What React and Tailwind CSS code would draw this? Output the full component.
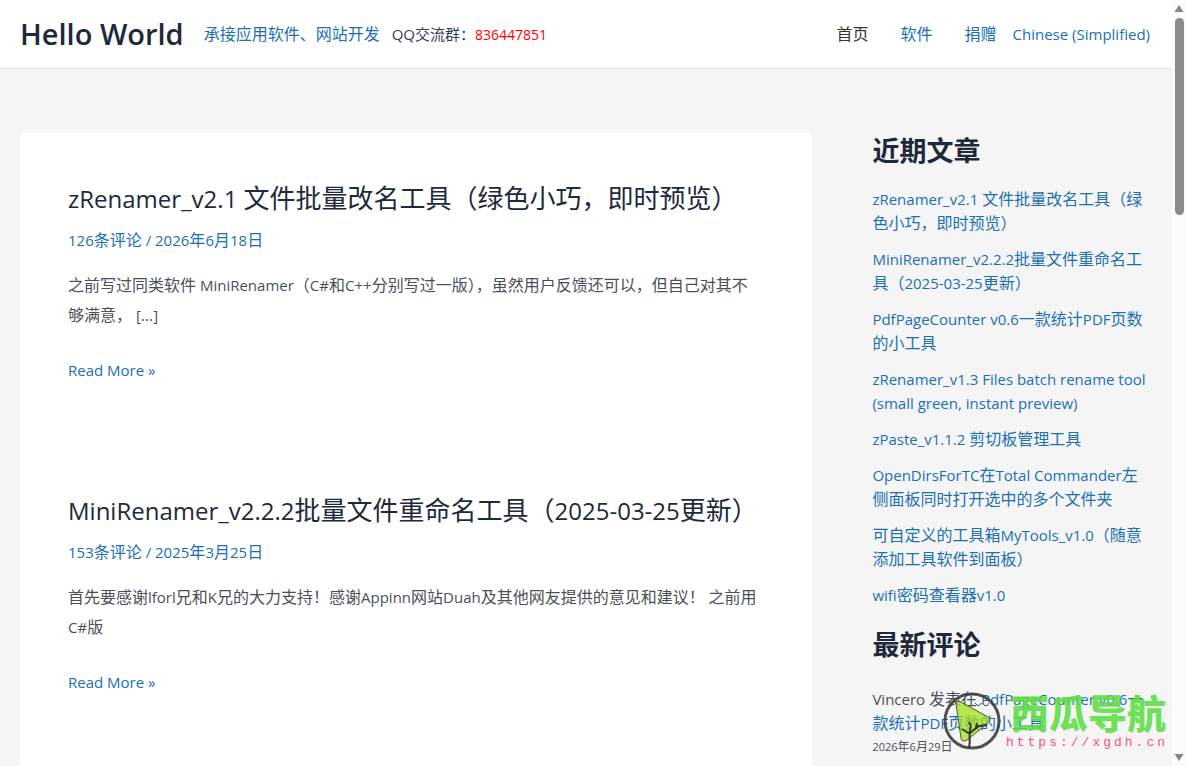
import React from 'react';

const navLinks = [
  { label: '首页', active: true },
  { label: '软件', active: false },
  { label: '捐赠', active: false },
];

const posts = [
  {
    title: 'zRenamer_v2.1 文件批量改名工具（绿色小巧，即时预览）',
    comments: '126条评论',
    date: '2026年6月18日',
    excerpt:
      '之前写过同类软件 MiniRenamer（C#和C++分别写过一版），虽然用户反馈还可以，但自己对其不够满意， […]',
  },
  {
    title: 'MiniRenamer_v2.2.2批量文件重命名工具（2025-03-25更新）',
    comments: '153条评论',
    date: '2025年3月25日',
    excerpt:
      '首先要感谢lforl兄和K兄的大力支持！感谢Appinn网站Duah及其他网友提供的意见和建议！ 之前用C#版',
  },
];

const recentPosts = [
  'zRenamer_v2.1 文件批量改名工具（绿色小巧，即时预览）',
  'MiniRenamer_v2.2.2批量文件重命名工具（2025-03-25更新）',
  'PdfPageCounter v0.6一款统计PDF页数的小工具',
  'zRenamer_v1.3 Files batch rename tool (small green, instant preview)',
  'zPaste_v1.1.2 剪切板管理工具',
  'OpenDirsForTC在Total Commander左侧面板同时打开选中的多个文件夹',
  '可自定义的工具箱MyTools_v1.0（随意添加工具软件到面板）',
  'wifi密码查看器v1.0',
];

// Latin runs are set one step smaller than the Chinese text around them
function Mixed({ text, latin = 'text-[15px]' }) {
  return text.split(/([\x20-\x7e]+)/).map((part, i) =>
    i % 2 === 1 ? (
      <span key={i} className={`${latin} leading-none`}>
        {part}
      </span>
    ) : (
      part
    ),
  );
}

function SiteHeader() {
  return (
    <header className="flex h-[69px] shrink-0 items-center justify-between border-b border-[#e6e6e6] bg-white px-5">
      <div className="flex items-center whitespace-nowrap">
        <a href="#" className="text-[29px] font-semibold leading-9 text-[#1e293b]">
          Hello World
        </a>
        <a href="#" className="ml-5 text-[#1b6fb3]">
          承接应用软件、网站开发
        </a>
        <span className="ml-3 text-[15px] text-[#334155]">
          <Mixed text="QQ交流群：" />
          <span className="text-sm text-[#f00]">836447851</span>
        </span>
      </div>
      <nav className="flex items-center whitespace-nowrap pr-0.5">
        {navLinks.map((link) => (
          <a
            key={link.label}
            href="#"
            className={`mr-8 ${link.active ? 'text-[#333]' : 'text-[#1b6fb3]'}`}
          >
            {link.label}
          </a>
        ))}
        <a href="#" className="-ml-4 text-[15px] text-[#1b6fb3]">
          Chinese (Simplified)
        </a>
      </nav>
    </header>
  );
}

function Post({ post }) {
  return (
    <article>
      <h2 className="text-[26px] leading-[34px] text-[#1e293b]">
        <a href="#">
          <Mixed text={post.title} latin="text-2xl" />
        </a>
      </h2>
      <div className="mt-[13px] text-[#1b6fb3]">
        <a href="#">
          <Mixed text={post.comments} />
        </a>
        <span className="text-[15px] leading-none"> / </span>
        <a href="#">
          <Mixed text={post.date} />
        </a>
      </div>
      <p className="mt-[18px] pr-1 leading-[30px] text-[#4b4f58]">
        <Mixed text={post.excerpt} />
      </p>
      <a href="#" className="mt-7 block text-[15px] text-[#1b6fb3]">
        Read More »
      </a>
    </article>
  );
}

function Sidebar() {
  return (
    <aside className="w-[30%] shrink-0 pl-[60px]">
      <h2 className="text-[27px] font-bold leading-9 text-[#1e293b]">近期文章</h2>
      <ul className="mt-[18px] space-y-3">
        {recentPosts.map((title) => (
          <li key={title}>
            <a href="#" className="text-[#1b6fb3]">
              <Mixed text={title} />
            </a>
          </li>
        ))}
      </ul>
      <h2 className="mt-5 text-[27px] font-bold leading-9 text-[#1e293b]">最新评论</h2>
      <ul className="mt-6">
        <li className="text-[#4b4f58]">
          <Mixed text="Vincero 发表在 " />
          <a href="#" className="text-[#1b6fb3]">
            <Mixed text="PdfPageCounter v0.6一款统计PDF页数的小工具" />
          </a>
          <time className="block text-xs leading-6">
            <Mixed text="2026年6月29日" latin="text-[11px]" />
          </time>
        </li>
      </ul>
    </aside>
  );
}

function Watermark() {
  return (
    <div className="pointer-events-none absolute right-[18px] bottom-[15px] flex items-center gap-1">
      <svg viewBox="0 0 60 60" className="h-[60px] w-[60px]" fill="none">
        <circle cx="30" cy="30" r="27" stroke="#3f3f3f" strokeWidth="3" opacity="0.9" />
        <path
          d="M14 13 Q14 9 19 11 L46 26 Q50 29 46 32 L25 49 Q20 52 19 47 Z"
          fill="#a3e01c"
          fillOpacity="0.75"
          stroke="#4a5a2a"
        />
        <path
          d="M27 57 C29 49 26 43 29 35 M28 43 L20 38 M28 42 L37 35 L45 34 M29 35 L27 31 M34 37 L35 32"
          stroke="#333"
          strokeWidth="2"
        />
        <path d="M33 12 l3 3 l4 -3 M42 14 l3 1 l2 -3" stroke="#444" />
      </svg>
      <div>
        <div className="pl-1 font-['Noto_Sans_CJK_SC',sans-serif] text-[39px] font-black leading-10 text-[#5ede45]/90">
          西瓜导航
        </div>
        <div className="mt-1 font-['Liberation_Mono',monospace] text-[13px] leading-4 tracking-[3px] text-[#ff4d7a]">
          https://xgdh.cn
        </div>
      </div>
    </div>
  );
}

function Scrollbar() {
  return (
    <div className="flex w-3.5 shrink-0 flex-col items-center bg-[#fcfcfc] py-1">
      <svg viewBox="0 0 10 10" className="h-2.5 w-2.5" fill="#858585">
        <path d="M5 1 L9.5 8 H0.5 Z" />
      </svg>
      <div className="mt-1 h-[26%] w-[9px] rounded-full bg-[#8b8b8b]" />
      <svg viewBox="0 0 10 10" className="mt-auto h-2.5 w-2.5" fill="#858585">
        <path d="M5 9 L9.5 2 H0.5 Z" />
      </svg>
    </div>
  );
}

export default function App() {
  return (
    <div
      lang="zh-CN"
      className="relative flex h-screen overflow-hidden bg-[#f5f5f5] font-['Open_Sans','Noto_Sans_CJK_SC',sans-serif] text-base leading-6"
    >
      <div className="flex min-w-0 grow flex-col overflow-hidden">
        <SiteHeader />
        <div className="flex grow px-5 pt-16">
          <main className="grow space-y-[111px] rounded-t bg-white p-12">
            {posts.map((post) => (
              <Post key={post.title} post={post} />
            ))}
          </main>
          <Sidebar />
        </div>
      </div>
      <Scrollbar />
      <Watermark />
    </div>
  );
}
